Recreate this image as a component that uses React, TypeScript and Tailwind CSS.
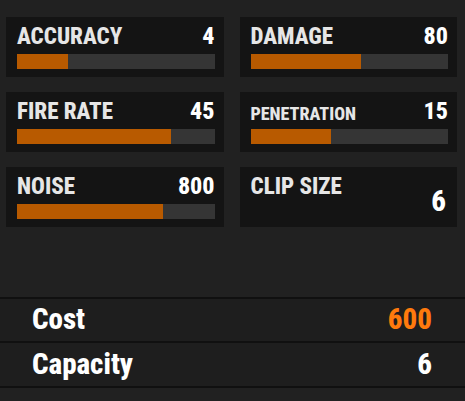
import React from "react"

const stats = [
  { label: "ACCURACY", value: "4", fill: 26 },
  { label: "DAMAGE", value: "80", fill: 56 },
  { label: "FIRE RATE", value: "45", fill: 78 },
  { label: "PENETRATION", value: "15", fill: 41, small: true },
  { label: "NOISE", value: "800", fill: 74 },
]

function StatCard({ label, value, fill, small }: { label: string; value: string; fill: number; small?: boolean }) {
  return (
    <div className="bg-[#141414] h-[60px] pl-[11px] pr-[9px] pt-[8px]">
      <div className="flex items-end justify-between h-[23px] leading-none">
        <span className={small ? "text-[18px] text-[#e6e6e6]" : "text-[23px] text-[#e6e6e6]"}>{label}</span>
        <span className="text-[24px] text-white">{value}</span>
      </div>
      <div className="mt-[6px] h-[15px] bg-[#353535]">
        <div className="h-full bg-[#b85a00]" style={{ width: `${fill}%` }} />
      </div>
    </div>
  )
}

export default function App() {
  return (
    <div
      className="w-[465px] h-[401px] bg-[#212121] overflow-hidden font-extrabold font-stretch-condensed"
      style={{ fontFamily: '"Roboto Condensed", "Roboto", sans-serif' }}
    >
      <div className="grid grid-cols-2 gap-x-[16px] gap-y-[15px] pl-[6px] pr-[8px] pt-[17px]">
        {stats.map((s) => (
          <StatCard key={s.label} {...s} />
        ))}
        <div className="bg-[#141414] h-[60px] pl-[11px] pr-[11px] pt-[8px] flex justify-between">
          <span className="text-[23px] leading-none text-[#e6e6e6]">CLIP SIZE</span>
          <span className="text-[29px] leading-none text-white self-center">6</span>
        </div>
      </div>

      <div className="mt-[70px] border-t-2 border-[#101010]">
        <div className="h-[42px] bg-[#1e1e1e] flex items-center justify-between pl-[32px] pr-[33px] text-[29px] border-b-2 border-[#101010] box-content">
          <span className="text-white">Cost</span>
          <span className="text-[#ff7a0d]">600</span>
        </div>
        <div className="h-[43px] bg-[#1e1e1e] flex items-center justify-between pl-[32px] pr-[33px] text-[29px] border-b-2 border-[#101010] box-content">
          <span className="text-white">Capacity</span>
          <span className="text-white">6</span>
        </div>
      </div>
    </div>
  )
}
